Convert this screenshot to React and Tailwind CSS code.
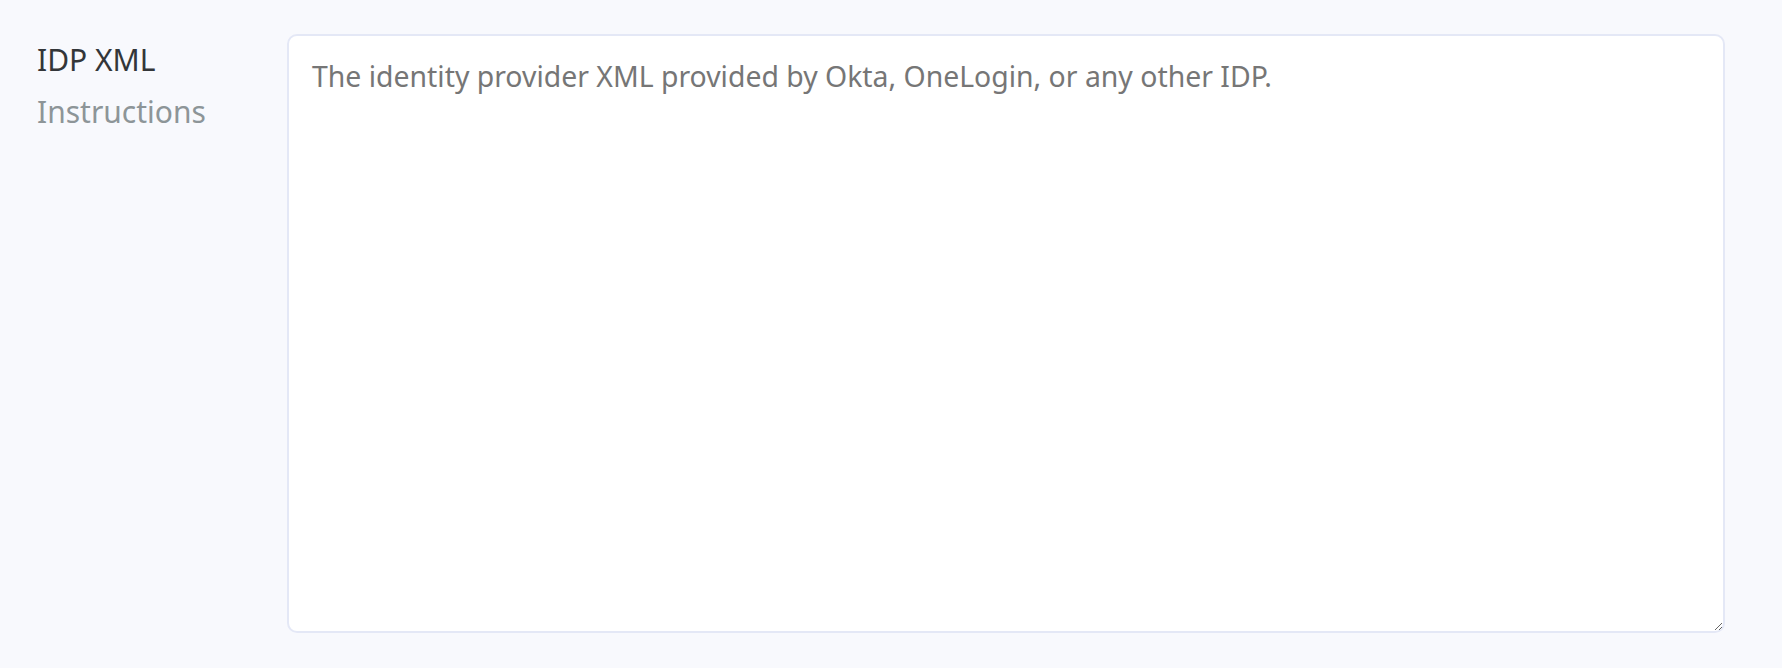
export default function App() {
  return (
    <div
      className="min-h-[668px] w-full bg-[#f8f9fd] pl-[37px] pr-[57px] pt-[34px]"
      style={{ fontFamily: '"Noto Sans", "Open Sans", sans-serif' }}
    >
      <div className="flex">
        <div className="w-[250px] shrink-0 pt-[6px]">
          <div className="text-[30px] leading-[40px] text-[#333639]">IDP XML</div>
          <div className="mt-[12px] text-[30px] leading-[40px] text-[#8d9598]">Instructions</div>
        </div>
        <textarea
          className="h-[599px] flex-1 resize rounded-[10px] border-2 border-[#e4e8f6] bg-white px-[23px] py-[20px] text-[28.4px] leading-[40px] text-[#333] placeholder:text-[#767676] outline-none"
          placeholder="The identity provider XML provided by Okta, OneLogin, or any other IDP."
        />
      </div>
    </div>
  );
}
